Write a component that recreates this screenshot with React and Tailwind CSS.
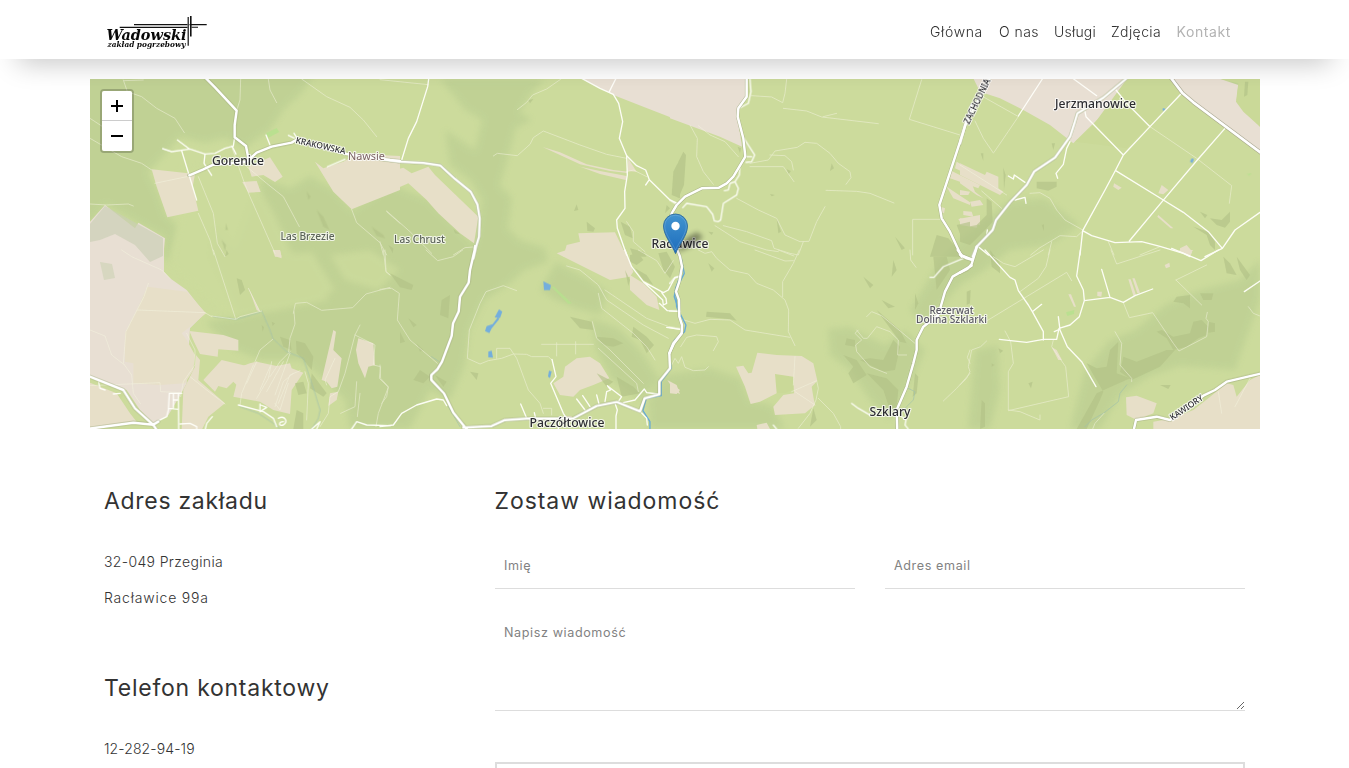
import React from "react";

const NAV = [
  { label: "Główna", cls: "w-[54px] tracking-[0.65px] text-[#2f2f2f]" },
  { label: "O nas", cls: "w-[40px] tracking-[0.45px] text-[#2f2f2f]" },
  { label: "Usługi", cls: "w-[42px] tracking-[0.2px] text-[#2f2f2f]" },
  { label: "Zdjęcia", cls: "w-[50.5px] tracking-[0.4px] text-[#2f2f2f]" },
  { label: "Kontakt", cls: "w-[54px] tracking-[0.6px] font-normal text-[#b3b3b3]" },
];

// Woodland and open ground, in page-wide map units.
const FOREST = [
  "M80 70H318L300 95 285 108 270 130 245 148 225 138 205 143 180 137 160 160 148 172 158 192 166 215 178 226 172 262 163 258 164 237 135 222 106 205 90 224 80 220Z",
  "M262 178L290 188 310 176 335 190 352 210 390 184 430 200 474 245 482 200 470 180 450 165 445 130 475 150 482 120 465 110 440 79H545L530 95 520 112 532 120 516 128 506 165 500 185 512 198 508 228 520 240 545 248 548 262 525 270 508 285 485 300 470 330 465 365 450 400 430 390 410 429H350L345 400 325 380 300 360 260 360 235 350 205 322 240 315 212 255 216 228 235 250Z",
  "M556 262L590 280 608 292 600 315 575 308 555 300 540 290Z",
  "M590 318L618 328 640 350 660 380 640 400 612 380 596 350Z",
  "M665 375L710 368 740 378 750 400 772 405 785 429H650L648 400Z",
  "M828 329L850 327 885 345 905 330 925 350 912 380 890 420 870 400 850 370 830 355Z",
  "M975 350L998 345 1000 390 990 429H968Z",
  "M1085 370L1110 340 1135 330 1165 305 1200 290 1240 280 1260 260V300L1235 370 1180 366 1150 376 1120 395 1100 429H1070Z",
  "M960 240L1010 200 1045 198 1080 225 1050 245 1010 250 985 270 960 285 925 325 910 310 940 260Z",
  "M1225 79H1260V130L1238 112Z",
];
const OPEN = [
  "M168 262L180 220 200 170 230 160 255 180 275 215 300 270 330 300 280 310 235 318 210 300Z",
  "M276 255L312 252 335 290 310 305 288 288Z",
  "M180 170L215 165 240 210 270 262 240 262 215 220Z",
  "M330 255L370 250 400 270 378 290 345 280Z",
];

// Each sheet uses its own origin and a grid of three units per pixel.
const SHEETS = [
  {
    x: 90, y: 0,
    grey: ["M0 665L45 615 110 665 135 685 145 668 225 715 220 770H0Z"],
    field: [
      "M185 508L315 522 308 560 325 632 232 652 200 560Z",
      "M475 500L540 472 578 530 555 546 520 525 485 530Z",
      "M457 546L500 543 512 576 475 578Z",
      "M675 485L700 505 760 485 800 462 930 468V570L785 628 730 575Z",
      "M548 750H570L575 770H555Z",
    ],
    shade: ["M650 575L662 590 655 600Z", "M680 630L700 650 718 690 700 680Z", "M845 680L880 705 885 715 860 708Z", "M395 720L408 735 405 755Z", "M408 670L414 690 406 690Z"],
    park: ["M528 400L560 384 568 396 535 413Z"],
    track: [
      "M100 240L112 275 155 290 200 325 255 355 283 398", "M452 237L450 300 440 332", "M535 237L540 270 560 308",
      "M635 237L710 290 780 322 820 360 860 410", "M0 415L95 470 155 490 185 510", "M0 355L35 378",
      "M325 530L370 640 382 730 405 770", "M425 440L460 540 480 590 555 760", "M470 500L530 550 580 590 628 680",
      "M325 640L360 720 372 765", "M0 612L50 615 115 612 130 618", "M195 550L300 528",
      "M785 628L800 668 870 728 890 765", "M890 635L930 670", "M102 242L160 240",
    ],
    lane: [
      "M218 446L245 455 300 447 345 462 375 460 405 445 430 438 434 412", "M262 420L298 447", "M275 452L320 600",
      "M345 462L342 490 365 526", "M426 438L438 462", "M528 405L540 435", "M595 406L625 420 612 400", "M712 500L765 478",
    ],
    road: ["M345 232L375 262 440 332 434 375 434 412 468 438 475 475", "M298 526L340 508 370 494 470 485 500 458 545 440 605 428 618 420 700 443 770 462 900 480 930 483"],
  },
  {
    x: 90, y: 250,
    grey: ["M-10 -10H222L222 65 240 85 290 120 345 190 300 235 290 400 268 440 232 500 190 520 150 480 110 420 0 378Z"],
    field: [
      "M172 110L290 125 348 190 300 230 275 250 290 270 315 315 310 360 285 400 210 405 130 400 130 340 105 335 105 250 142 178Z",
      "M298 243L400 255 445 270 445 302 385 298 383 320 330 312 312 275Z",
      "M395 330L470 348 440 405 430 395 410 415 385 408 375 425 340 390Z",
      "M458 348L480 340 500 335 560 348 600 340 605 355 640 368 605 420 600 492 550 480 510 455 430 440 440 400Z",
      "M318 315L330 330 325 390 405 460 355 500 335 540H275L280 420 315 350Z",
      "M730 240L738 245 730 300 755 325 742 410 725 415 710 395 695 390Z",
      "M805 265L850 280 855 345 835 350 825 385 805 340 798 300Z",
      "M720 430L745 425 740 450 715 468Z", "M475 112L510 185 500 180Z", "M550 0H570L575 25 560 20Z",
      "M0 398L80 430 120 490 140 515 0 540Z",
    ],
    shade: [
      "M570 260L600 270 605 300 580 290Z", "M618 272L645 280 670 320 665 360 645 335 620 310Z", "M665 370L710 430 700 440 660 415Z",
      "M440 85L455 90 465 120 450 135 445 110Z", "M515 225L522 232 518 245Z", "M615 400L640 395 650 430 625 435Z", "M620 480L640 490 640 537H610Z",
      "M545 215L555 220 548 228Z", "M410 0L416 12 405 20Z",
    ],
    leaf: ["M0 470L60 465 75 490 120 490 120 500 0 505Z", "M0 400L60 430 100 435 90 450 40 440Z"],
    pond: [],
    track: [
      "M95 0L125 20 215 60 240 85", "M175 100L162 140 142 178 108 245 100 340 125 375 130 430 152 462", "M142 180L345 188",
      "M0 240L45 258 65 315 100 342", "M370 0L437 207", "M365 198L437 208 450 200 515 183", "M475 115L510 185",
      "M610 190L616 160 650 157 695 181 788 173 828 132 900 112", "M885 0L888 65 900 75", "M612 185L615 222 600 265 596 305",
      "M810 225L795 255 765 370 745 425 720 440 715 490 690 530", "M495 335L510 300 548 268", "M795 255L855 285 850 345 872 350 868 385 895 412 865 490 858 530",
      "M580 335L530 425", "M600 310L555 435", "M490 345L455 430 450 465", "M345 188L365 200", "M290 250L315 300 315 345 280 395 272 440",
      "M595 400L570 480 555 460", "M610 370L580 395 555 470", "M800 395L795 470 752 490", "M0 407L210 398 212 425 275 428",
      "M540 350L510 420", "M630 362L600 375 565 460", "M735 325L705 390 710 405", "M810 430L802 500", "M500 335L470 400", "M300 380L350 420 405 462",
      "M545 335L535 385 500 445", "M600 305L570 335 540 380", "M645 365L655 400 650 510",
    ],
    stream: ["M515 183L540 240 548 265 590 305 640 325 655 370 675 430 690 480 685 505 665 537", "M450 470L505 490 550 520 570 537", "M370 200L440 208 510 187"],
    lane: [
      "M238 430H275M238 430L235 480 230 500 200 515M250 430V475M265 430L266 537M250 450H265M237 475L265 478", "M445 465L520 485 550 505 560 530", "M510 462V485L530 472 512 465",
      "M270 522L300 520 320 530V540", "M345 540L350 520 367 500", "M565 505C585 495 595 515 580 525 565 530 565 515 580 515", "M665 537L690 515 680 537", "M785 537L800 515 830 525 900 527", "M25 395L30 415 45 420M70 432L90 430",
    ],
    road: ["M-10 376L100 420 135 475 190 525 200 540", "M-10 537L130 518 190 524 205 515"],
  },
  {
    x: 380, y: 75,
    grey: ["M605 10H900V138L790 95 700 60Z"],
    field: [
      "M-60 255L20 270 45 285 70 278 95 295 145 275 165 300 295 425 282 505 240 475 175 415 140 375 85 325 0 362Z",
      "M488 216L540 232 620 268 700 285 745 290 742 294 690 288 600 268Z", "M745 250L752 262 770 290 742 288Z",
      "M545 255L600 275 660 288 740 303V316L660 297Z",
      "M595 475L705 472 740 545H550L560 510 600 500Z",
    ],
    shade: ["M590 388L595 405 582 408Z", "M620 440L645 460 640 470 622 468Z", "M722 440L750 455 758 490 735 480Z", "M860 390L870 400 855 415Z", "M445 75L460 72 450 85Z", "M880 290L890 270 900 255V370L875 360Z", "M750 520L790 530 800 545H760Z", "M220 462L240 478 225 475Z", "M25 510L40 520 38 535Z"],
    track: [
      "M0 14L145 29", "M543 12L500 42 458 60 440 82 412 104", "M340 243L352 235 412 242 450 208 460 188 490 168 600 210 680 238 740 250",
      "M20 408L90 470 155 535", "M220 540L255 518 280 516", "M740 290L760 285 800 305", "M740 440L760 470 760 500 795 530", "M0 500L10 540",
    ],
    lane: ["M146 12L143 35 110 140 85 190 65 255", "M707 12L688 50", "M605 10L660 40 700 58 716 85 728 140 718 190 740 242 742 300 734 350 735 400 710 435 712 460 740 540", "M740 242L770 272 797 285 808 314 870 375 893 385M808 314L797 330"],
    road: ["M0 252L60 260 130 264 180 271 225 312 272 350 292 388 299 430 297 485 288 515 280 550"],
  },
  {
    x: 380, y: 250,
    field: [
      "M530 10L560 0H735L760 65 750 80 690 90Z", "M750 75L790 100 830 140 838 180 800 165 750 120Z",
      "M520 400L550 380 555 350 590 325 630 320 660 340 688 385 640 405 600 420 580 440 540 435Z",
      "M862 390L885 425 900 432 890 405Z", "M555 498H575V510H555Z",
    ],
    shade: [
      "M30 70L70 90 100 105 95 120 60 112Z", "M185 150L210 135 205 205 180 195Z", "M85 205L110 225 100 232Z", "M60 245L75 275 60 280Z", "M110 280L130 300 120 305Z",
      "M570 200L635 215 640 240 600 235Z", "M650 260L700 265 730 280 700 290 670 285Z", "M760 230L800 260 822 285 800 310 780 270 755 260Z", "M100 390L120 360 150 380 130 400Z",
      "M735 60L750 90 745 108Z", "M710 380L760 410 780 430 725 440Z", "M750 15L775 10 790 30 770 45 750 35Z", "M765 55L800 75 820 105 790 90Z", "M835 10L860 5 885 50 870 85 850 60Z", "M270 365L295 370 290 390Z", "M165 375L200 395 190 410Z", "M650 370L700 395 680 410Z",
    ],
    park: ["M520 108L575 160 565 162 515 112Z"],
    pond: ["M490 94L513 105 510 120 492 120Z", "M357 178L367 185 360 204 344 202Z", "M320 228L338 222 355 200 357 208 335 235 328 249 315 243Z", "M325 305L335 302 339 323 325 322Z", "M507 362L515 365 510 384 504 380Z"],
    track: [
      "M138 0L173 32 220 20 248 0", "M10 0L18 65 30 75", "M0 118L35 115 58 130 52 210 90 270 155 325 172 340",
      "M410 122L370 107 318 125 300 160 268 240 262 325 300 342 325 332 365 325 400 312 440 313 455 320 505 320 516 330",
      "M350 325V295H390L410 325 445 420 480 460 490 490", "M560 48L600 60 655 105 680 150 790 225 865 265", "M655 130L665 175 760 250 800 290 825 330",
      "M637 215L650 265 690 300 790 400M655 295L770 400 775 425", "M485 283H640M530 278V318M587 275V312", "M775 0L830 32 855 70 880 32", "M675 120L800 205 880 235", "M0 345L2 385 25 410 20 440 5 460", "M490 475L515 475V495",
    ],
    lane: [
      "M0 530L40 525 65 490 110 465 170 447 190 450 200 467", "M516 328L528 380 512 400 550 490 560 505", "M735 0L755 50 790 95 848 150 850 165 860 160 858 145 845 128M790 95L850 128 865 120 885 82 900 80", "M838 160L862 182 900 185M860 232L900 238",
      "M422 462L440 505M463 488L467 505M590 447L615 480M608 437L630 470M650 435L657 462M675 455L680 425 692 420 682 407 725 440 715 455M730 458L765 450 793 417 800 428 835 432M705 460L712 480 708 498M780 484L800 505 802 525M535 510V540M708 498V537",
    ],
    stream: ["M155 320L178 335M205 470L240 530"],
    river: ["M905 60L885 115 888 170 900 200M895 258L876 280 866 315 872 355 842 395 842 437 797 446 787 482 808 515V540"],
    road: ["M285 -10L284 0 270 60 266 98 240 140 236 185 219 220 215 258 186 335 172 358 154 375 154 390 192 430 220 488 262 540", "M250 533L335 528 375 510 440 506 580 505 650 468 710 456 780 484 794 445 838 433 838 395 870 355 868 310 880 280 905 250"],
  },
  {
    x: 670, y: 75,
    grey: ["M-10 10H228L228 70 203 100 203 130 216 215 150 185 0 130Z"],
    field: ["M860 260L930 300V315L855 280Z", "M845 288L930 330 925 340 840 310Z", "M830 335L900 382V390L850 370Z", "M812 395L825 400 822 415 812 412Z", "M865 432L930 420V450L870 440Z"],
    shade: ["M40 230L48 240 42 330 25 370 5 345 20 330 25 260Z", "M485 265L492 280 480 288Z", "M300 357L315 360 305 364Z", "M675 485L705 520 695 525Z", "M320 430L333 470 325 475Z", "M800 480L835 490 870 530V545H780Z", "M860 450L900 440V500L875 490Z", "M115 470L130 472 125 480Z", "M203 215L213 220 210 235Z", "M350 283L363 288 355 298Z"],
    track: [
      "M350 12L345 55 338 83 305 66 245 62", "M340 100L410 108 455 126 625 146M460 125L500 115", "M755 14L718 133 870 180", "M60 150L82 190 80 245 100 290 130 328",
      "M85 152L120 180 165 200 205 245", "M240 265L295 255 315 228 382 217 405 202 440 205 480 235 505 265 540 290 543 308 528 328", "M300 240L345 242 365 260 370 285M240 275L340 275 372 320",
      "M468 346L560 349 600 355 672 384", "M200 370L265 405 320 430 345 480 390 500 417 499 440 440 465 395", "M160 452L230 470 305 497 312 520 360 535 385 540 400 500", "M135 452L210 500 290 525 325 530", "M728 540V433H812",
    ],
    lane: ["M240 12L243 50 235 85 210 98", "M222 190L254 240 245 260 228 262M228 245L245 245M210 270L208 300 195 320 205 340 200 360 160 385 152 435 145 440 133 438 128 418 110 395 50 385 38 398M195 320L180 325 175 345 163 347M0 375L20 388"],
    road: ["M230 5V65L205 100 203 125 220 190 226 245 190 305 170 325 147 338 95 340 45 365 20 390 5 415 -10 480", "M905 90L880 170 808 390 815 430 840 470 875 545"],
  },
  {
    x: 670, y: 250,
    field: ["M262 308L320 315 395 318 430 340 442 392 425 410 430 440 435 465 405 490 315 495 310 470 340 435 372 430 370 380 315 372 320 430 270 455 242 462 225 410 198 350 220 347 235 370 245 368Z", "M260 525L290 518 300 537H262Z", "M0 400L30 420 20 432 0 430Z"],
    leaf: ["M315 370L372 382 370 418 345 430 320 430Z"],
    shade: ["M110 185L180 190 200 212 180 208 108 200Z", "M580 80L610 105 600 115Z", "M520 315L560 330 590 375 550 400 535 370 550 350Z", "M590 370L650 385 685 420 680 470 660 480 640 420Z", "M670 270L690 290 675 360 640 365 570 330 600 325 640 330Z", "M620 180L690 240 710 280 690 275Z", "M735 370L745 380 740 430 728 440Z", "M790 20L830 20 840 60 800 120Z", "M430 475L440 510 420 530Z", "M530 265L555 270 555 290 525 285Z", "M670 30L680 60 665 80Z", "M735 130L745 160 735 180Z", "M115 40L133 55 125 65Z", "M635 150L675 170 655 175Z"],
    track: [
      "M85 0L105 10 125 5 140 25 180 60 235 72 260 100 310 120 345 150 356 180 355 245 375 287", "M388 0L370 40 338 95V140", "M255 0L345 33 370 32M325 0L372 18",
      "M35 208L75 220 120 208 180 210 225 240 360 262", "M32 290L50 262 80 255 140 260 145 275 130 302", "M375 320L370 405M365 425L440 392 445 415 438 450 420 490 385 535M375 425L435 465M445 445L490 490 512 530V537",
      "M590 200L605 185 635 197 735 280", "M560 240L580 265 592 265 620 230 660 245 685 270 683 315 710 315M565 240L555 250 575 270 557 285 560 305 600 350 650 370", "M720 0L722 30 738 52M900 370L860 415 820 453M900 300L892 322 900 340", "M5 345L15 325 25 340 35 320 45 352 70 362 105 360 115 350",
    ],
    stream: ["M690 490L730 450 735 425 715 415"],
    lane: ["M780 82L792 82 820 50 880 25M545 460L565 475 600 495M695 500L708 510 705 525 715 537M310 525L322 540M0 183H30M0 232L30 237M0 100L12 85 28 78"],
    river: ["M20 0L32 25 41 70 30 92 15 115 11 140 28 190 46 225 42 245 12 270 -2 300"],
    road: ["M18 -10L30 20 36 50 28 95 18 125 27 150 28 200 36 225 35 250 12 280 -2 310", "M863 0L875 16 905 28", "M905 47L848 80 825 125 805 195 760 230 740 270 740 300 730 340 710 410 680 480 682 545"],
  },
  {
    x: 960, y: 75,
    grey: ["M40 10H502L540 10 380 165 340 205 270 150 190 105 120 70 60 50Z", "M630 10H775L835 30 830 75 900 155V235L700 85 665 55Z"],
    leaf: ["M502 10H632L665 50 500 220 345 200 400 150Z", "M775 10H900V155L850 110 828 80 835 25Z"],
    field: [
      "M0 265L75 300 80 290 115 305 115 340 130 350 120 360 0 300Z", "M0 305L35 325 45 350 70 370 50 360 0 325Z", "M30 380L60 375 70 390 35 395Z", "M0 430L55 440 50 458 0 450Z", "M462 325L485 338 475 345 460 335Z", "M595 355L605 330 625 345 610 358Z", "M595 420L640 460 632 460 592 425Z", "M660 520L680 510 697 530 690 545 660 530Z", "M0 345L30 350 25 360 0 360Z", "M10 408L35 410 40 425 10 420Z",
    ],
    shade: ["M230 320L290 320 290 335 265 347 230 340Z", "M62 235L70 235 70 258Z", "M275 205L285 205 280 225Z", "M130 278L137 300 132 345Z", "M750 430L785 435 810 410 810 440 795 458 770 450Z", "M720 410L742 420 735 430Z", "M700 455L745 470 765 500 765 525 750 510 740 480Z", "M80 370L95 380 98 440 70 470 30 510 0 500V460L50 450 80 420Z", "M245 450L252 448V468Z", "M855 20L865 20 862 60 852 65Z"],
    park: ["M860 297L875 295 868 302Z"],
    pond: ["M608 100H615V107H608Z", "M695 250L702 252 697 264 690 260Z"],
    track: [
      "M60 60L172 123M45 138L70 190 100 234M175 125L102 232", "M570 155L710 250 815 332 808 385", "M65 348L125 400", "M210 355L240 353 270 370 290 405 315 435 368 465M368 468L350 485 300 482 270 500 240 518 212 540M275 500L265 540", "M445 500L462 540M600 515L540 540M0 270L140 360",
    ],
    lane: ["M247 12L175 123M338 10L410 62M468 45L500 85 570 155", "M662 58L570 155 490 240 467 285 435 345 368 467 360 540M375 110L378 125 490 240M467 287L610 375 670 412 745 470 787 520M797 158L712 255 612 373 508 498M368 467L395 482 465 503 545 500 600 514 670 535 690 545M735 545L787 520 825 465 900 412", "M330 200L320 220 310 268 288 295 293 310M195 322L163 300 160 312 145 303M165 375L195 367 198 385", "M55 515L85 540M80 480L82 465"],
    road: ["M90 8L15 150 0 205", "M502 8L430 68 352 115 343 145 330 185 285 248 222 290 200 330 150 382 108 435 98 465 50 515 38 545"],
    wide: ["M630 5L668 55 700 82 905 235"],
  },
  {
    x: 960, y: 250,
    field: ["M498 442L530 437 590 460 580 490 530 510 500 495Z", "M325 133L333 133 348 170 342 170Z", "M275 292L290 300 306 330 295 330Z", "M412 125L426 125 424 140 412 138Z", "M505 88L512 88 528 135 520 137Z", "M517 85L524 85 540 128 532 130Z", "M614 45L628 38 630 50 618 55Z", "M580 515L640 505 700 480 745 445 800 400 820 405 830 440 870 390 900 375V537H580Z", "M655 0H700L685 12Z"],
    leaf: ["M700 485L730 470 745 500 740 537H690Z", "M840 440L870 410 880 425 850 470 880 510 860 530 840 490Z", "M640 515L670 510 680 537H650Z"],
    shade: [
      "M650 140L690 135 690 175 670 160 640 155Z", "M720 130L760 130 755 150 730 150Z", "M745 215L765 220 765 245 745 248Z", "M700 215L725 210 745 230 740 255 715 265 680 290 640 300 620 265 590 245 605 240 640 260 690 250Z", "M380 340L410 355 440 350 450 300 475 275 470 370 510 385 410 430 350 537H380L420 450 430 425Z",
      "M490 320L530 335 620 300 645 300 600 350 515 390 480 365Z", "M790 20L810 40 830 75 800 70Z", "M830 20L870 75 860 90 840 60Z", "M65 450L75 460V530L60 537Z", "M205 400L218 395 213 415Z", "M95 340L103 345 95 350Z", "M90 0L120 40V70L95 50Z", "M20 125L32 120 30 160 20 165Z", "M600 405L632 405 625 417Z", "M115 295L130 302 120 310Z",
    ],
    park: ["M318 187L343 180 342 192 322 198Z"],
    track: [
      "M100 20L130 40 165 50 250 0M270 0L258 50 235 85 180 125M60 225L320 67 335 92", "M453 0L470 42 600 0M490 158L508 203 578 188 640 280 657 303 740 260 745 215 738 205 742 187", "M648 90L740 45M648 90L725 165", "M465 245L485 280 480 345 515 385 515 395", "M135 243L152 275 160 340 145 365 145 480 180 485 240 510V495M145 482L326 440 317 350 275 290 280 270", "M80 273L62 290 35 300 25 350 30 365 20 385 0 405M432 490L405 520 398 537M865 170L880 190 900 198M775 425L785 490M870 385L825 470",
    ],
    stream: ["M500 405L480 430 475 455 430 490 395 510 375 530"],
    lane: ["M75 0L150 82 165 90 175 122 205 165 217 185 250 245V270M118 268L200 277 250 268 290 268 297 235 330 225 358 200 373 152 370 120 350 78 361 0M217 185L245 163M295 200L300 240 322 290 365 335 408 410M283 245L300 237M373 152L450 142 425 58M450 142L490 157 525 137 578 117M635 -5L723 32 775 0M853 125L900 93"],
    road: ["M50 -10L48 0 35 42 22 57 0 68", "M0 14L20 25 38 30", "M520 545L528 510 590 500 630 510 730 437 765 420 800 395 905 370"],
  },
];

const STYLES = {
  grey: { fill: "#e8dfd3" },
  field: { fill: "#e7dfc8" },
  leaf: { fill: "#cad998" },
  shade: { fill: "#b2c287", opacity: 0.65 },
  park: { fill: "#b6e28e", opacity: 0.8 },
  pond: { fill: "#74aedc" },
};
const FILLS = ["grey", "leaf", "field", "shade", "park", "pond"];

function Layer({ kind, ...props }) {
  return (
    <g {...props}>
      {SHEETS.map((s, i) => (
        <g key={i} transform={`translate(${s.x} ${s.y}) scale(0.33333)`}>
          {(s[kind] || []).map((d, j) => <path key={j} d={d} />)}
        </g>
      ))}
    </g>
  );
}

function Label({ x, y, w, children, size = 12, fill = "#2d2d32", weight = 500, rotate = 0 }) {
  return (
    <text
      x={x} y={y} textLength={w} lengthAdjust="spacingAndGlyphs" textAnchor="middle"
      transform={`rotate(${rotate} ${x} ${y})`} fontFamily='"Noto Sans", "Open Sans", sans-serif'
      fontSize={size} fontWeight={weight} fill={fill} stroke="#ffffff" strokeOpacity="0.75"
      strokeWidth="2.2" strokeLinejoin="round" paintOrder="stroke"
    >
      {children}
    </text>
  );
}

function MapArt() {
  const line = { fill: "none", strokeLinejoin: "round", strokeLinecap: "round" };
  return (
    <svg viewBox="90 79 1170 350" className="block h-[350px] w-[1170px]">
      <defs>
        <filter id="soft" x="-10%" y="-10%" width="120%" height="120%"><feGaussianBlur stdDeviation="3" /></filter>
        <filter id="pinShade" x="-60%" y="-60%" width="220%" height="220%"><feGaussianBlur stdDeviation="2.6" /></filter>
        <linearGradient id="pin" x1="0" y1="0" x2="0" y2="1"><stop stopColor="#4394d0" /><stop offset="1" stopColor="#1c6cbc" /></linearGradient>
      </defs>
      <rect x="90" y="79" width="1170" height="350" fill="#ccdb9c" />
      <g fill="#bfd194" opacity="0.9" filter="url(#soft)">{FOREST.map((d, i) => <path key={i} d={d} />)}</g>
      <g fill="#ccdb9c" opacity="0.85" filter="url(#soft)">{OPEN.map((d, i) => <path key={i} d={d} />)}</g>
      {FILLS.map((k) => <Layer key={k} kind={k} {...STYLES[k]} />)}
      <path d="M90 224L105 206 163 238 163 256 150 262 135 245 115 234 100 240 90 242Z" fill="#c9ceb3" opacity="0.65" />
      <path d="M100 262L112 264 115 278 104 280Z" fill="#c6cfad" opacity="0.5" />
      <Layer kind="stream" {...line} stroke="#a0c0ac" strokeWidth="2.4" opacity="0.8" />
      <Layer kind="track" {...line} stroke="#f3f3df" strokeWidth="2.6" opacity="0.6" />
      <Layer kind="river" {...line} stroke="#66aad6" strokeWidth="4" transform="translate(0.6 0)" />
      <Layer kind="lane" {...line} stroke="#fffffa" strokeWidth="4" opacity="0.95" />
      <Layer kind="road" {...line} stroke="#a4ae83" strokeWidth="10.5" opacity="0.8" />
      <Layer kind="wide" {...line} stroke="#a3a18a" strokeWidth="12" opacity="0.85" />
      <Layer kind="road" {...line} stroke="#ffffff" strokeWidth="7.4" />
      <Layer kind="wide" {...line} stroke="#ffffff" strokeWidth="8" />
      <Label x={238} y={164.5} w={52}>Gorenice</Label>
      <Label x={366.5} y={160} w={37} size={11} fill="#7b6262" weight={400}>Nawsie</Label>
      <Label x={307.5} y={240} w={54} size={10} fill="#5b6358">Las Brzezie</Label>
      <Label x={419.5} y={243} w={51} size={10} fill="#5b6358">Las Chrust</Label>
      <Label x={680} y={247.5} w={57}>Racławice</Label>
      <Label x={1095.5} y={107.5} w={81}>Jerzmanowice</Label>
      <Label x={951.5} y={313.5} w={44} size={9.8} fill="#5c5a65">Rezerwat</Label>
      <Label x={951.5} y={323} w={71} size={9.8} fill="#5c5a65">Dolina Szklarki</Label>
      <Label x={890} y={415.5} w={41}>Szklary</Label>
      <Label x={567} y={426.5} w={75}>Paczółtowice</Label>
      <Label x={320} y={148.5} w={51} size={8.5} rotate={13}>KRAKOWSKA</Label>
      <Label x={979.5} y={102.5} w={49} size={8.5} rotate={-64}>ZACHODNIA</Label>
      <Label x={1188} y={410} w={38} size={8.5} rotate={-34}>KAWIORY</Label>
      <path d="M676 253L686 238 697 232 703 237 692 246Z" fill="#000" opacity="0.38" filter="url(#pinShade)" />
      <path d="M675.5 253.6C672.5 245.5 663.5 235.5 663.5 226A12 12 0 0 1 687.5 226C687.5 235.5 678.5 245.5 675.5 253.6Z" fill="url(#pin)" stroke="#2e6c9e" strokeWidth="0.9" />
      <path d="M675.5 250C672.5 243 664.7 234 664.7 226A10.8 10.8 0 0 1 686.3 226C686.3 234 678.5 243 675.5 250Z" fill="none" stroke="#fff" strokeOpacity="0.15" />
      <circle cx="675.5" cy="226" r="4.2" fill="#fff" />
    </svg>
  );
}

function Logo() {
  return (
    <svg viewBox="0 0 104 36" className="block h-[36px] w-[104px]" aria-label="Wadowski zakład pogrzebowy">
      <g fontFamily='"DejaVu Serif", "Liberation Serif", serif' fontWeight="700" fontStyle="italic" fill="#080808">
        <text x="1.5" y="26" fontSize="14.6" textLength="80" lengthAdjust="spacingAndGlyphs">Wadowski</text>
        <text x="2.5" y="32.6" fontSize="8" textLength="78" lengthAdjust="spacingAndGlyphs">zakład pogrzebowy</text>
      </g>
      <g fill="#111">
        <path d="M29 10H82.5V11.3H29ZM84.5 10H101.7V11.3H84.5Z" /><path d="M14.7 12.8H82.5V13.9H14.7ZM86.5 12.8H93V13.7H86.5Z" />
        <path d="M82.6 3H83.8V31.7H82.6Z" /><path d="M85 2H86.6V22.5H85Z" />
      </g>
    </svg>
  );
}

const H = "text-[23px] leading-[28px] font-normal text-[#333] whitespace-nowrap";
const P = "text-[14px] leading-[36px] font-light text-[#333] whitespace-nowrap";
const FIELD = "block w-full rounded-none border-0 border-b border-[#ddd] bg-transparent px-[9.5px] text-[12.6px] font-normal tracking-[0.6px] text-[#555] outline-none placeholder:text-[#828282]";

export default function App() {
  return (
    <div className="h-[768px] overflow-hidden bg-white font-['Inter','Liberation_Sans',sans-serif]">
      <header className="relative z-10 h-[59px] bg-white shadow-[0_20px_28px_-18px_rgba(0,0,0,0.28)]">
        <div className="mx-auto flex h-full w-[1170px] items-center justify-between pr-[29px] pl-[15px]">
          <div className="mt-[5px]"><Logo /></div>
          <nav className="mt-[5px] flex gap-[15px] text-[14px] leading-[20px] font-light">
            {NAV.map((n) => <a key={n.label} className={"whitespace-nowrap " + n.cls}>{n.label}</a>)}
          </nav>
        </div>
      </header>
      <main className="mx-auto w-[1170px]">
        <section className="relative mt-[20px] h-[350px] overflow-hidden">
          <MapArt />
          <div className="absolute top-[10px] left-[10px] flex w-[34px] flex-col overflow-hidden rounded-[4px] border-2 border-black/20 bg-clip-padding">
            <button className="flex h-[30px] items-center justify-center border-b border-[#ccc] bg-white" aria-label="Zoom in">
              <svg viewBox="0 0 12 12" className="size-[12px]"><path d="M0 6H12M6 0V12" stroke="#000" strokeWidth="2" /></svg>
            </button>
            <button className="flex h-[30px] items-center justify-center bg-white" aria-label="Zoom out">
              <svg viewBox="0 0 12 12" className="size-[12px]"><path d="M0 6H12" stroke="#000" strokeWidth="2" /></svg>
            </button>
          </div>
        </section>
        <div className="flex pt-[58px]">
          <aside className="w-[390px] px-[14.5px]">
            <h2 className={H + " tracking-[0.7px]"}>Adres zakładu</h2>
            <div className="pt-[29px]">
              <p className={P + " tracking-[0.35px]"}>32-049 Przeginia</p>
              <p className={P + " tracking-[0.8px]"}>Racławice 99a</p>
            </div>
            <h2 className={H + " mt-[58px] tracking-[0.75px]"}>Telefon kontaktowy</h2>
            <div className="pt-[29px]"><p className={P + " tracking-[0.1px]"}>12-282-94-19</p></div>
          </aside>
          <form className="w-[780px] px-[15px]">
            <h2 className={H + " tracking-[0.95px]"}>Zostaw wiadomość</h2>
            <div className="mt-[29px] grid grid-cols-2 gap-[30px]">
              <input className={FIELD + " h-[45px] pb-[2px]"} placeholder="Imię" />
              <input className={FIELD + " h-[45px] pb-[2px]"} placeholder="Adres email" />
            </div>
            <textarea className={FIELD + " mt-[22px] h-[100px] resize pt-[12px] leading-[20px]"} placeholder="Napisz wiadomość" />
            <button type="button" className="mt-[51px] block h-[50px] w-full border-2 border-[#ddd] bg-white" aria-label="Wyślij" />
          </form>
        </div>
      </main>
    </div>
  );
}
